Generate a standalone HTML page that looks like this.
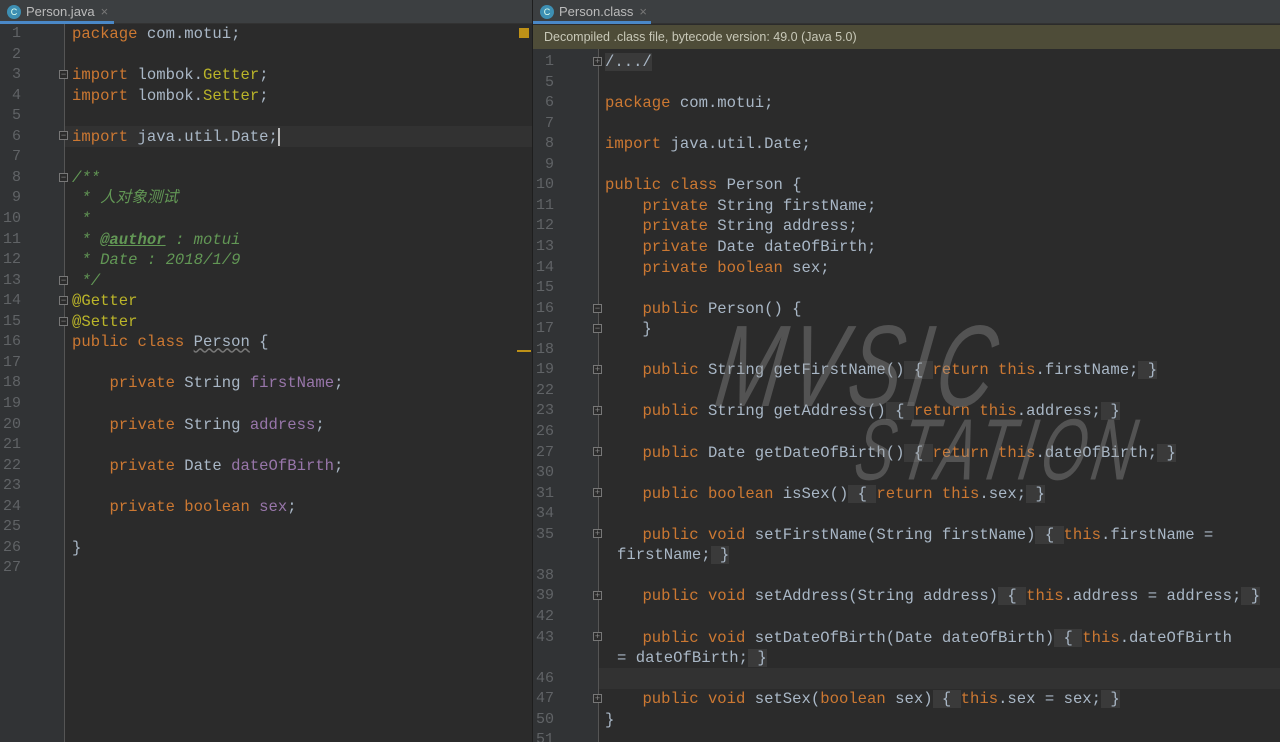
<!DOCTYPE html>
<html><head><meta charset="utf-8"><style>
*{margin:0;padding:0;box-sizing:border-box}
html,body{width:1280px;height:742px;overflow:hidden}
body{background:#2b2b2b;position:relative;font-family:"Liberation Mono","Noto Sans CJK SC",monospace;font-size:15.6px;color:#a9b7c6}
.tabbar{position:absolute;top:0;height:24px;background:#3c3f41;border-bottom:1px solid #323232}
.tab{position:absolute;top:0;height:24px;font-family:"Liberation Sans",sans-serif;font-size:13px;color:#bbb;line-height:24px;padding-left:26px;border-bottom:3px solid #4a88c7;background:#3c3f41}
.tab i{position:absolute;left:7px;top:5px;width:14px;height:14px;border-radius:50%;background:#3d8fb3;color:#dfe;font-style:normal;font-size:9px;line-height:14px;text-align:center}
.tab b{font-weight:normal;color:#777;margin-left:6px}
.gut{position:absolute;top:24px;bottom:0;background:#313335}
.vl{position:absolute;top:24px;bottom:0;width:1px;background:#555}
.ln{position:absolute;height:20.55px;line-height:20.55px;color:#606366;text-align:right;width:24px;font-size:15px}
.cl{position:absolute;height:20.55px;line-height:20.55px;white-space:pre}
.k{color:#cc7832}.f{color:#9876aa}.a{color:#bbb529}.c{color:#629755;font-style:italic}
.fb{background:#3a3a3a}
.hl{position:absolute;height:20.55px;background:#323232}
.fold{position:absolute;width:9px;height:9px;border:1px solid #777;font-size:9px;line-height:7px;text-align:center;color:#888;font-family:"Liberation Sans",sans-serif;background:#2b2b2b}
.wm{position:absolute;font-family:"Liberation Sans",sans-serif;font-style:italic;color:rgba(150,150,150,0.38);letter-spacing:6px;transform-origin:0 0}
</style></head><body>
<div class="tabbar" style="left:0;width:532px"></div>
<div class="tabbar" style="left:533px;width:747px"></div>
<div class="tab" style="left:0;width:114px">Person.java<b>×</b><i>C</i></div>
<div class="tab" style="left:533px;width:118px">Person.class<b>×</b><i>C</i></div>
<div style="position:absolute;left:532px;top:0;bottom:0;width:1px;background:#1e1e1e"></div>
<div class="gut" style="left:0;width:64px"></div>
<div class="vl" style="left:64px"></div>
<div class="gut" style="left:533px;top:49px;width:65px"></div>
<div class="vl" style="left:598px;top:49px"></div>
<div style="position:absolute;left:533px;top:25px;width:747px;height:24px;background:#4e4c38;font-family:'Liberation Sans',sans-serif;font-size:12.5px;color:#c8c8b8;line-height:24px;padding-left:11px">Decompiled .class file, bytecode version: 49.0 (Java 5.0)</div>
<div style="position:absolute;left:519px;top:28px;width:10px;height:10px;background:#be9117"></div>
<div style="position:absolute;left:517px;top:350px;width:14px;height:2px;background:#be9117"></div>
<div class="hl" style="left:65px;top:126px;width:467px"></div>
<div class="hl" style="left:599px;top:668px;width:681px"></div>

<!-- left -->
<div class="ln" style="left:-3px;top:24px">1</div><div class="cl" style="left:72px;top:24px"><span class="k">package</span> com.motui;</div>
<div class="ln" style="left:-3px;top:44.5px">2</div>
<div class="ln" style="left:-3px;top:65px">3</div><div class="cl" style="left:72px;top:65px"><span class="k">import</span> lombok.<span class="a">Getter</span>;</div>
<div class="ln" style="left:-3px;top:85.6px">4</div><div class="cl" style="left:72px;top:85.6px"><span class="k">import</span> lombok.<span class="a">Setter</span>;</div>
<div class="ln" style="left:-3px;top:106px">5</div>
<div class="ln" style="left:-3px;top:126.7px">6</div><div class="cl" style="left:72px;top:126.7px"><span class="k">import</span> java.util.Date;<span style="border-left:2px solid #bbb"></span></div>
<div class="ln" style="left:-3px;top:147px">7</div>
<div class="ln" style="left:-3px;top:167.8px">8</div><div class="cl c" style="left:72px;top:167.8px">/**</div>
<div class="ln" style="left:-3px;top:188.4px">9</div><div class="cl c" style="left:72px;top:188.4px"> * 人对象测试</div>
<div class="ln" style="left:-3px;top:209px">10</div><div class="cl c" style="left:72px;top:209px"> *</div>
<div class="ln" style="left:-3px;top:229.5px">11</div><div class="cl c" style="left:72px;top:229.5px"> * <b style="text-decoration:underline">@author</b> : motui</div>
<div class="ln" style="left:-3px;top:250px">12</div><div class="cl c" style="left:72px;top:250px"> * Date : 2018/1/9</div>
<div class="ln" style="left:-3px;top:270.6px">13</div><div class="cl c" style="left:72px;top:270.6px"> */</div>
<div class="ln" style="left:-3px;top:291px">14</div><div class="cl a" style="left:72px;top:291px">@Getter</div>
<div class="ln" style="left:-3px;top:311.7px">15</div><div class="cl a" style="left:72px;top:311.7px">@Setter</div>
<div class="ln" style="left:-3px;top:332.3px">16</div><div class="cl" style="left:72px;top:332.3px"><span class="k">public class</span> <span style="text-decoration:underline wavy #777">Person</span> {</div>
<div class="ln" style="left:-3px;top:352.8px">17</div>
<div class="ln" style="left:-3px;top:373.4px">18</div><div class="cl" style="left:72px;top:373.4px">    <span class="k">private</span> String <span class="f">firstName</span>;</div>
<div class="ln" style="left:-3px;top:394px">19</div>
<div class="ln" style="left:-3px;top:414.5px">20</div><div class="cl" style="left:72px;top:414.5px">    <span class="k">private</span> String <span class="f">address</span>;</div>
<div class="ln" style="left:-3px;top:435px">21</div>
<div class="ln" style="left:-3px;top:455.6px">22</div><div class="cl" style="left:72px;top:455.6px">    <span class="k">private</span> Date <span class="f">dateOfBirth</span>;</div>
<div class="ln" style="left:-3px;top:476px">23</div>
<div class="ln" style="left:-3px;top:496.7px">24</div><div class="cl" style="left:72px;top:496.7px">    <span class="k">private boolean</span> <span class="f">sex</span>;</div>
<div class="ln" style="left:-3px;top:517.3px">25</div>
<div class="ln" style="left:-3px;top:537.8px">26</div><div class="cl" style="left:72px;top:537.8px">}</div>
<div class="ln" style="left:-3px;top:558.4px">27</div>
<div class="fold" style="left:59px;top:70px">−</div><div class="fold" style="left:59px;top:131px">−</div><div class="fold" style="left:59px;top:173px">−</div><div class="fold" style="left:59px;top:276px">−</div><div class="fold" style="left:59px;top:296px">−</div><div class="fold" style="left:59px;top:317px">−</div>

<!-- right -->
<div class="ln" style="left:530px;top:52px">1</div><div class="cl" style="left:605px;top:52px"><span class="fb">/.../</span></div>
<div class="ln" style="left:530px;top:72.5px">5</div>
<div class="ln" style="left:530px;top:93px">6</div><div class="cl" style="left:605px;top:93px"><span class="k">package</span> com.motui;</div>
<div class="ln" style="left:530px;top:113.6px">7</div>
<div class="ln" style="left:530px;top:134.2px">8</div><div class="cl" style="left:605px;top:134.2px"><span class="k">import</span> java.util.Date;</div>
<div class="ln" style="left:530px;top:154.7px">9</div>
<div class="ln" style="left:530px;top:175.3px">10</div><div class="cl" style="left:605px;top:175.3px"><span class="k">public class</span> Person {</div>
<div class="ln" style="left:530px;top:195.8px">11</div><div class="cl" style="left:605px;top:195.8px">    <span class="k">private</span> String firstName;</div>
<div class="ln" style="left:530px;top:216.4px">12</div><div class="cl" style="left:605px;top:216.4px">    <span class="k">private</span> String address;</div>
<div class="ln" style="left:530px;top:237px">13</div><div class="cl" style="left:605px;top:237px">    <span class="k">private</span> Date dateOfBirth;</div>
<div class="ln" style="left:530px;top:257.5px">14</div><div class="cl" style="left:605px;top:257.5px">    <span class="k">private boolean</span> sex;</div>
<div class="ln" style="left:530px;top:278px">15</div>
<div class="ln" style="left:530px;top:298.6px">16</div><div class="cl" style="left:605px;top:298.6px">    <span class="k">public</span> Person() {</div>
<div class="ln" style="left:530px;top:319.2px">17</div><div class="cl" style="left:605px;top:319.2px">    }</div>
<div class="ln" style="left:530px;top:339.8px">18</div>
<div class="ln" style="left:530px;top:360.3px">19</div><div class="cl" style="left:605px;top:360.3px">    <span class="k">public</span> String getFirstName()<span class="fb"> { </span><span class="k">return this</span>.firstName;<span class="fb"> }</span></div>
<div class="ln" style="left:530px;top:380.9px">22</div>
<div class="ln" style="left:530px;top:401.4px">23</div><div class="cl" style="left:605px;top:401.4px">    <span class="k">public</span> String getAddress()<span class="fb"> { </span><span class="k">return this</span>.address;<span class="fb"> }</span></div>
<div class="ln" style="left:530px;top:422px">26</div>
<div class="ln" style="left:530px;top:442.5px">27</div><div class="cl" style="left:605px;top:442.5px">    <span class="k">public</span> Date getDateOfBirth()<span class="fb"> { </span><span class="k">return this</span>.dateOfBirth;<span class="fb"> }</span></div>
<div class="ln" style="left:530px;top:463px">30</div>
<div class="ln" style="left:530px;top:483.6px">31</div><div class="cl" style="left:605px;top:483.6px">    <span class="k">public boolean</span> isSex()<span class="fb"> { </span><span class="k">return this</span>.sex;<span class="fb"> }</span></div>
<div class="ln" style="left:530px;top:504.2px">34</div>
<div class="ln" style="left:530px;top:524.7px">35</div><div class="cl" style="left:605px;top:524.7px">    <span class="k">public void</span> setFirstName(String firstName)<span class="fb"> { </span><span class="k">this</span>.firstName =</div>
<div class="cl" style="left:617px;top:545.3px">firstName;<span class="fb"> }</span></div>
<div class="ln" style="left:530px;top:565.8px">38</div>
<div class="ln" style="left:530px;top:586.4px">39</div><div class="cl" style="left:605px;top:586.4px">    <span class="k">public void</span> setAddress(String address)<span class="fb"> { </span><span class="k">this</span>.address = address;<span class="fb"> }</span></div>
<div class="ln" style="left:530px;top:607px">42</div>
<div class="ln" style="left:530px;top:627.5px">43</div><div class="cl" style="left:605px;top:627.5px">    <span class="k">public void</span> setDateOfBirth(Date dateOfBirth)<span class="fb"> { </span><span class="k">this</span>.dateOfBirth</div>
<div class="cl" style="left:617px;top:648px">= dateOfBirth;<span class="fb"> }</span></div>
<div class="ln" style="left:530px;top:668.6px">46</div>
<div class="ln" style="left:530px;top:689.2px">47</div><div class="cl" style="left:605px;top:689.2px">    <span class="k">public void</span> setSex(<span class="k">boolean</span> sex)<span class="fb"> { </span><span class="k">this</span>.sex = sex;<span class="fb"> }</span></div>
<div class="ln" style="left:530px;top:709.7px">50</div><div class="cl" style="left:605px;top:709.7px">}</div>
<div class="ln" style="left:530px;top:730.3px">51</div>
<div class="fold" style="left:593px;top:57px">+</div><div class="fold" style="left:593px;top:304px">−</div><div class="fold" style="left:593px;top:324px">−</div>
<div class="fold" style="left:593px;top:365px">+</div><div class="fold" style="left:593px;top:406px">+</div><div class="fold" style="left:593px;top:447px">+</div><div class="fold" style="left:593px;top:488px">+</div><div class="fold" style="left:593px;top:529px">+</div><div class="fold" style="left:593px;top:591px">+</div><div class="fold" style="left:593px;top:632px">+</div><div class="fold" style="left:593px;top:694px">+</div>

<div class="wm" style="left:728px;top:300px;font-size:80px;transform:scale(1,1.45) skewX(-12deg)">MVSIC</div>
<div class="wm" style="left:865px;top:400px;font-size:58px;transform:scale(1,1.5) skewX(-14deg)">STATION</div>
</body></html>
